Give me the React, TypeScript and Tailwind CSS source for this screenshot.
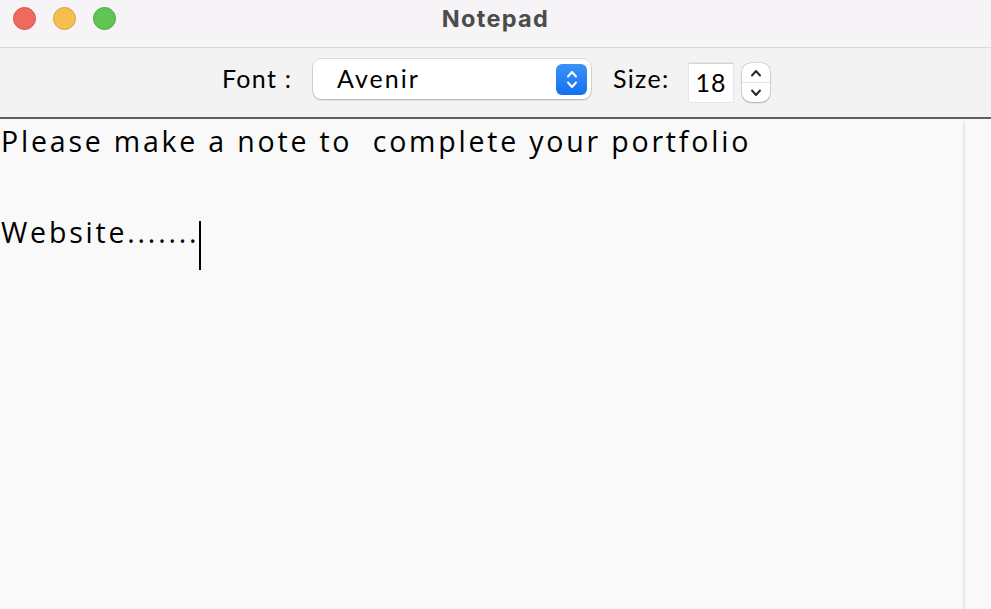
import React from "react";

const AVENIR = { fontFamily: "Lato, 'Noto Sans', sans-serif" };
const BODY = { fontFamily: "'Open Sans', Lato, sans-serif" };

function TrafficLights() {
    return (
        <div className="flex items-center gap-[17px] pl-[13px]">
            <span className="w-[23px] h-[23px] rounded-full bg-[#ee6a5f] border border-[#d6564c]" />
            <span className="w-[23px] h-[23px] rounded-full bg-[#f5bf4f] border border-[#d9a33a]" />
            <span className="w-[23px] h-[23px] rounded-full bg-[#61c554] border border-[#4fa942]" />
        </div>
    );
}

function Chevron({ dir, className = "" }: { dir: "up" | "down"; className?: string }) {
    return (
        <svg width="12" height="8" viewBox="0 0 12 8" className={className}>
            <path
                d={dir === "up" ? "M2 6.5 L6 2 L10 6.5" : "M2 1.5 L6 6 L10 1.5"}
                fill="none"
                stroke="currentColor"
                strokeWidth="2"
                strokeLinecap="round"
                strokeLinejoin="round"
            />
        </svg>
    );
}

export default function App() {
    return (
        <div className="w-[991px] h-[609px] flex flex-col overflow-hidden bg-[#f8f9f8]" style={AVENIR}>
            {/* Title bar */}
            <div className="h-[48px] bg-[#f6f4f6] border-b border-[#d9d9d9]">
                <div className="h-[37px] grid grid-cols-[1fr_auto_1fr] items-center">
                    <TrafficLights />
                    <span
                        className="text-[23.5px] font-bold text-[#4c4c4c] tracking-[1.3px]"
                        style={{ fontFamily: "Inter, 'Liberation Sans', sans-serif" }}
                    >
                        Notepad
                    </span>
                    <div />
                </div>
            </div>

            {/* Toolbar */}
            <div className="h-[71px] bg-[#f3f3f3] border-b-2 border-[#5f5f5f] flex items-start pl-[222px] text-[25px] tracking-[1.3px] text-black">
                <span className="mt-[15px] leading-[30px] w-[70px] whitespace-nowrap">Font :</span>
                <div className="ml-[21px] mt-[11px] w-[278px] h-[40px] bg-white rounded-[8px] shadow-[0_0_0_0.5px_rgba(0,0,0,0.18),0_1px_2px_rgba(0,0,0,0.22)] flex items-center pl-[24px] pr-[4px]">
                    <span className="flex-1 tracking-[2px]">Avenir</span>
                    <div className="w-[31px] h-[31px] rounded-[6px] bg-gradient-to-b from-[#3a92f8] to-[#1570f0] flex flex-col items-center justify-center gap-[3px] text-white">
                        <Chevron dir="up" />
                        <Chevron dir="down" />
                    </div>
                </div>
                <span className="ml-[22px] mt-[15px] leading-[30px] w-[56px] whitespace-nowrap">Size:</span>
                <div className="ml-[20px] mt-[15px] w-[44px] h-[39px] bg-white border-t border-[#d4d4d4] shadow-[0_0_0_0.5px_rgba(0,0,0,0.1)] flex items-center justify-center">
                    <span className="tracking-[1px]">18</span>
                </div>
                <div className="ml-[9px] mt-[15px] w-[28px] h-[39px] bg-white rounded-[9px] shadow-[0_0_0_0.5px_rgba(0,0,0,0.2),0_1px_2px_rgba(0,0,0,0.2)] flex flex-col text-[#2b2b2b]">
                    <div className="flex-1 flex items-center justify-center border-b border-[#e2e2e2]">
                        <Chevron dir="up" />
                    </div>
                    <div className="flex-1 flex items-center justify-center">
                        <Chevron dir="down" />
                    </div>
                </div>
            </div>

            {/* Text area */}
            <div className="flex-1 flex bg-[#f8f9f8]">
                <div
                    className="flex-1 pl-[1px] text-[28.5px] leading-[45.5px] tracking-[2.8px] text-black whitespace-pre"
                    style={BODY}
                >
                    <div>Please make a note to  complete your portfolio</div>
                    <div>{"\u00a0"}</div>
                    <div>
                        <span>Website.......</span>
                        <span className="inline-block w-[2px] h-[49px] bg-black align-[-27px]" />
                    </div>
                </div>
                <div className="mt-[2px] w-[28px] border-l-2 border-[#e8e8e8] bg-[#f9f9f9]" />
            </div>
        </div>
    );
}
